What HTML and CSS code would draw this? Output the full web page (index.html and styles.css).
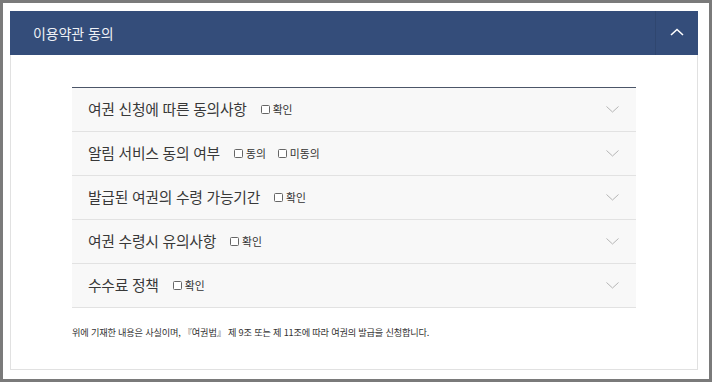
FILE: index.html
```html
<!DOCTYPE html>
<html lang="ko">
<head>
<meta charset="utf-8">
<link rel="stylesheet" href="styles.css">
</head>
<body>
<div class="frame">
  <section class="panel">
    <header class="panel-head">
      <h2 class="panel-title">이용약관 동의</h2>
      <button class="toggle" type="button" aria-label="접기">
        <svg width="14" height="8" viewBox="0 0 14 8"><path d="M1 7L7 1.5L13 7" fill="none" stroke="#ffffff" stroke-width="1.6"/></svg>
      </button>
    </header>
    <div class="panel-body">
      <ul class="accordion">
        <li class="item">
          <span class="item-title">여권 신청에 따른 동의사항</span>
          <label class="chk"><span class="box"></span>확인</label>
          <svg class="chev" width="13" height="7" viewBox="0 0 13 7"><path d="M0.5 0.5L6.5 6L12.5 0.5" fill="none" stroke="#b5b5b5" stroke-width="1"/></svg>
        </li>
        <li class="item">
          <span class="item-title">알림 서비스 동의 여부</span>
          <label class="chk"><span class="box"></span>동의</label>
          <label class="chk"><span class="box"></span>미동의</label>
          <svg class="chev" width="13" height="7" viewBox="0 0 13 7"><path d="M0.5 0.5L6.5 6L12.5 0.5" fill="none" stroke="#b5b5b5" stroke-width="1"/></svg>
        </li>
        <li class="item">
          <span class="item-title">발급된 여권의 수령 가능기간</span>
          <label class="chk"><span class="box"></span>확인</label>
          <svg class="chev" width="13" height="7" viewBox="0 0 13 7"><path d="M0.5 0.5L6.5 6L12.5 0.5" fill="none" stroke="#b5b5b5" stroke-width="1"/></svg>
        </li>
        <li class="item">
          <span class="item-title">여권 수령시 유의사항</span>
          <label class="chk"><span class="box"></span>확인</label>
          <svg class="chev" width="13" height="7" viewBox="0 0 13 7"><path d="M0.5 0.5L6.5 6L12.5 0.5" fill="none" stroke="#b5b5b5" stroke-width="1"/></svg>
        </li>
        <li class="item">
          <span class="item-title">수수료 정책</span>
          <label class="chk"><span class="box"></span>확인</label>
          <svg class="chev" width="13" height="7" viewBox="0 0 13 7"><path d="M0.5 0.5L6.5 6L12.5 0.5" fill="none" stroke="#b5b5b5" stroke-width="1"/></svg>
        </li>
      </ul>
      <p class="note">위에 기재한 내용은 사실이며, 『여권법』 제 9조 또는 제 11조에 따라 여권의 발급을 신청합니다.</p>
    </div>
  </section>
</div>
</body>
</html>
```

FILE: styles.css
```css
* { box-sizing: border-box; }
html, body { margin: 0; padding: 0; }
body {
  width: 712px;
  height: 382px;
  background: #ffffff;
  font-family: "Noto Sans CJK KR", "Noto Sans", sans-serif;
  color: #333333;
  overflow: hidden;
}
.frame {
  width: 712px;
  height: 382px;
  border: 3px solid #7a7a7a;
  padding: 8px 11px 0 7px;
  background: #ffffff;
}
.panel {
  width: 688px;
  height: 359px;
  border: 1px solid #e1e1e1;
  border-top: none;
  display: flex;
  flex-direction: column;
}
.panel-head {
  height: 44px;
  margin: 0 -1px;
  background: #344d7a;
  display: flex;
  align-items: stretch;
  justify-content: space-between;
}
.panel-title {
  margin: 0;
  padding-left: 23px;
  font-size: 14px;
  font-weight: 400;
  color: #eef1f6;
  line-height: 44px;
  letter-spacing: -0.1px;
}
.toggle {
  width: 43px;
  border: none;
  border-left: 1px solid #2f466f;
  background: #344d7a;
  padding: 0;
  display: flex;
  align-items: center;
  justify-content: center;
}
.toggle svg { display: block; margin-top: -2px; }
.panel-body {
  padding: 32px 61px 0 61px;
}
.accordion {
  list-style: none;
  margin: 0;
  padding: 0;
  border-top: 1px solid #4b5568;
}
.item {
  height: 44px;
  background: #f8f8f8;
  border-bottom: 1px solid #e2e2e2;
  display: flex;
  align-items: center;
  padding: 0 16px 0 16px;
}
.item-title {
  font-size: 14.8px;
  letter-spacing: -0.25px;
  color: #383838;
  margin-right: 14px;
  margin-top: -2px;
}
.chk {
  display: flex;
  align-items: center;
  font-size: 10.8px;
  color: #333333;
  margin-right: 12px;
  margin-top: -1px;
}
.box {
  width: 9px;
  height: 9px;
  border: 1px solid #666666;
  border-radius: 1.5px;
  background: #ffffff;
  margin-right: 3px;
}
.chev {
  margin-left: auto;
  margin-right: 1px;
  display: block;
}
.note {
  margin: 17px 0 0 0;
  font-size: 9.2px;
  letter-spacing: -0.2px;
  color: #333333;
}
```
